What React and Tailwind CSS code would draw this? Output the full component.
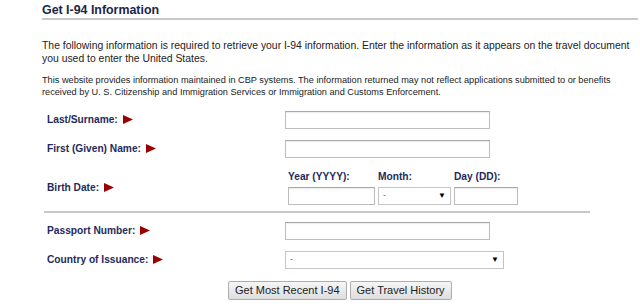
import React from 'react';

const Arrow = () => (
  <svg width="10" height="9" viewBox="0 0 10 9" className="ml-[5px] inline-block">
    <polygon points="0,0 10,4.5 0,9" fill="#990000" />
  </svg>
);

const Label = ({ children }) => (
  <div className="w-[243px] pl-[5px] flex items-center text-[10.2px] font-bold text-[#1f2a5a]">
    <span>{children}</span>
    <Arrow />
  </div>
);

const TextBox = ({ w }) => (
  <input
    type="text"
    className={`${w} h-[18px] border border-[#bdbdbd] border-t-[#a9a9a9] bg-white shadow-[inset_0_1px_1px_rgba(0,0,0,0.08)] outline-none`}
  />
);

const Select = ({ w }) => (
  <div className={`${w} h-[18px] border border-[#c4c4c4] bg-white flex items-center justify-between px-[4px] text-[9px] text-[#666]`}>
    <span>-</span>
    <span className="text-[8px] text-black">▼</span>
  </div>
);

const SubLabel = ({ children }) => (
  <span className="text-[10.2px] font-bold text-[#1f2a5a] leading-[13px] mb-[4px]">{children}</span>
);

export default function App() {
  return (
    <div className="w-[640px] h-[306px] bg-white overflow-hidden font-['Liberation_Sans',Arial,sans-serif] text-[#222]">
      <div className="pl-[42px] pr-[2px] pt-[3px]">
        {/* Title */}
        <h1 className="text-[12.4px] font-bold text-[#1c2547] leading-[14px] pb-[1px] border-b-2 border-[#c8c8c8]">
          Get I-94 Information
        </h1>

        {/* Intro text */}
        <p className="mt-[19px] pr-[8px] text-[10.4px] leading-[13px] text-[#222]">
          The following information is required to retrieve your I-94 information. Enter the information as it appears on the travel document you used to enter the United States.
        </p>
        <p className="mt-[9px] text-[9.2px] leading-[12px] text-[#222] pr-[20px]">
          This website provides information maintained in CBP systems. The information returned may not reflect applications submitted to or benefits received by U. S. Citizenship and Immigration Services or Immigration and Customs Enforcement.
        </p>

        {/* Form */}
        <div className="mt-[13px] w-[548px]">
          <div className="flex items-center h-[18px]">
            <Label>Last/Surname:</Label>
            <TextBox w="w-[205px]" />
          </div>
          <div className="flex items-center h-[18px] mt-[11px]">
            <Label>First (Given) Name:</Label>
            <TextBox w="w-[205px]" />
          </div>

          <div className="flex items-end mt-[12px]">
            <div className="pb-[10px]">
              <Label>Birth Date:</Label>
            </div>
            <div className="flex gap-[3px] pl-[2px]">
              <div className="flex flex-col pl-[1px]">
                <SubLabel>Year (YYYY):</SubLabel>
                <TextBox w="w-[87px]" />
              </div>
              <div className="flex flex-col">
                <SubLabel>Month:</SubLabel>
                <Select w="w-[73px]" />
              </div>
              <div className="flex flex-col">
                <SubLabel>Day (DD):</SubLabel>
                <TextBox w="w-[64px]" />
              </div>
            </div>
          </div>

          <div className="mt-[6px] ml-[2px] border-t-2 border-[#c8c8c8]" />

          <div className="flex items-center h-[18px] mt-[9px]">
            <Label>Passport Number:</Label>
            <TextBox w="w-[205px]" />
          </div>
          <div className="flex items-center h-[17px] mt-[11px]">
            <Label>Country of Issuance:</Label>
            <Select w="w-[219px]" />
          </div>
        </div>

        {/* Buttons */}
        <div className="flex justify-start gap-[3px] mt-[13px] pl-[186px]">
          <button className="h-[19px] px-[6px] text-[11px] text-[#222] border border-[#adadad] rounded-[2px] bg-gradient-to-b from-[#f6f6f6] to-[#dedede] leading-none">
            Get Most Recent I-94
          </button>
          <button className="h-[19px] px-[6px] text-[11px] text-[#222] border border-[#adadad] rounded-[2px] bg-gradient-to-b from-[#f6f6f6] to-[#dedede] leading-none">
            Get Travel History
          </button>
        </div>
      </div>
    </div>
  );
}
